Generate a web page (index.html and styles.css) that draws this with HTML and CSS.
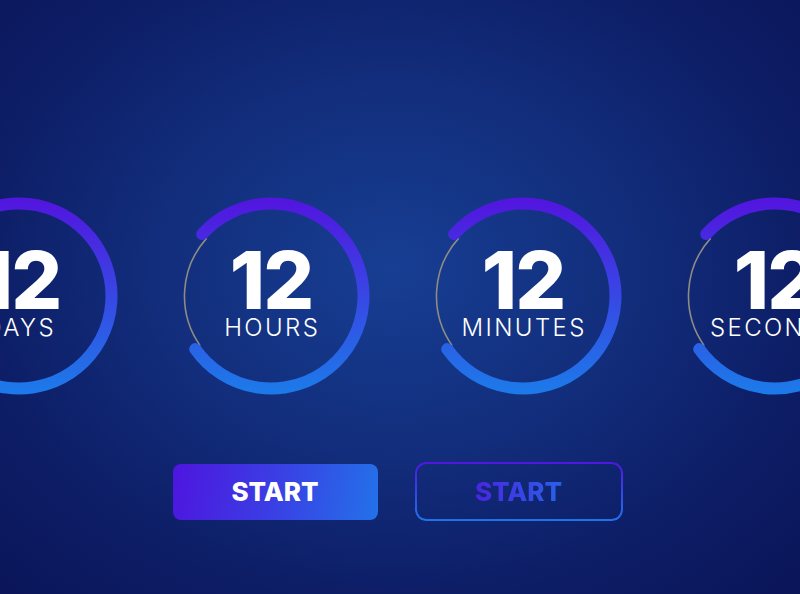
FILE: index.html
```html
<!DOCTYPE html>
<html lang="en">
<head>
<meta charset="utf-8">
<title>Countdown</title>
<link rel="stylesheet" href="styles.css">
</head>
<body>
<main class="stage">
  <section class="timers">
    <div class="timer">
      <svg class="ring" viewBox="0 0 200 200" width="200" height="200">
        <defs>
          <linearGradient id="arc-days" gradientUnits="userSpaceOnUse" x1="100" y1="6" x2="100" y2="194">
            <stop offset="0" stop-color="#5216df"/>
            <stop offset="1" stop-color="#1d79e9"/>
          </linearGradient>
        </defs>
        <path class="track" d="M 29.14 149.62 A 86.5 86.5 0 0 1 35.72 42.12"/>
        <path class="arc" stroke="url(#arc-days)" d="M 31.26 38.11 A 92.5 92.5 0 1 1 24.23 153.06"/>
      </svg>
      <div class="readout">
        <span class="value">12</span>
        <span class="unit">DAYS</span>
      </div>
    </div>
    <div class="timer">
      <svg class="ring" viewBox="0 0 200 200" width="200" height="200">
        <defs>
          <linearGradient id="arc-hours" gradientUnits="userSpaceOnUse" x1="100" y1="6" x2="100" y2="194">
            <stop offset="0" stop-color="#5216df"/>
            <stop offset="1" stop-color="#1d79e9"/>
          </linearGradient>
        </defs>
        <path class="track" d="M 29.14 149.62 A 86.5 86.5 0 0 1 35.72 42.12"/>
        <path class="arc" stroke="url(#arc-hours)" d="M 31.26 38.11 A 92.5 92.5 0 1 1 24.23 153.06"/>
      </svg>
      <div class="readout">
        <span class="value">12</span>
        <span class="unit">HOURS</span>
      </div>
    </div>
    <div class="timer">
      <svg class="ring" viewBox="0 0 200 200" width="200" height="200">
        <defs>
          <linearGradient id="arc-minutes" gradientUnits="userSpaceOnUse" x1="100" y1="6" x2="100" y2="194">
            <stop offset="0" stop-color="#5216df"/>
            <stop offset="1" stop-color="#1d79e9"/>
          </linearGradient>
        </defs>
        <path class="track" d="M 29.14 149.62 A 86.5 86.5 0 0 1 35.72 42.12"/>
        <path class="arc" stroke="url(#arc-minutes)" d="M 31.26 38.11 A 92.5 92.5 0 1 1 24.23 153.06"/>
      </svg>
      <div class="readout">
        <span class="value">12</span>
        <span class="unit">MINUTES</span>
      </div>
    </div>
    <div class="timer">
      <svg class="ring" viewBox="0 0 200 200" width="200" height="200">
        <defs>
          <linearGradient id="arc-seconds" gradientUnits="userSpaceOnUse" x1="100" y1="6" x2="100" y2="194">
            <stop offset="0" stop-color="#5216df"/>
            <stop offset="1" stop-color="#1d79e9"/>
          </linearGradient>
        </defs>
        <path class="track" d="M 29.14 149.62 A 86.5 86.5 0 0 1 35.72 42.12"/>
        <path class="arc" stroke="url(#arc-seconds)" d="M 31.26 38.11 A 92.5 92.5 0 1 1 24.23 153.06"/>
      </svg>
      <div class="readout">
        <span class="value">12</span>
        <span class="unit">SECONDS</span>
      </div>
    </div>
  </section>
  <div class="actions">
    <button class="btn btn-solid" type="button">START</button>
    <button class="btn btn-outline" type="button"><span class="btn-label">START</span></button>
  </div>
</main>
</body>
</html>
```
FILE: styles.css
```css
* {
  box-sizing: border-box;
}

html,
body {
  margin: 0;
  height: 100%;
}

body {
  overflow: hidden;
  font-family: "Inter", "Open Sans", "Liberation Sans", sans-serif;
  background: radial-gradient(ellipse 75% 80% at 49% 45%, #173e93 0%, #122d7b 40%, #0d1d66 70%, #0a1456 100%);
  color: #fff;
}

.stage {
  display: flex;
  flex-direction: column;
  align-items: center;
  padding: 196px 6px 0 0;
  height: 100%;
}

/* Row of countdown rings; wider than the viewport, spills evenly on both sides */
.timers {
  display: flex;
  justify-content: center;
  gap: 52px;
  width: 100%;
}

.timer {
  flex: none;
  display: grid;
  width: 200px;
  height: 200px;
}

.ring,
.readout {
  grid-area: 1 / 1;
}

.ring {
  display: block;
}

.arc {
  fill: none;
  stroke-width: 12;
  stroke-linecap: round;
}

.track {
  fill: none;
  stroke: #8e8b84;
  stroke-width: 1.6;
}

.readout {
  display: flex;
  flex-direction: column;
  align-items: center;
  justify-content: center;
  padding-bottom: 15px;
}

.value {
  font-weight: 800;
  font-size: 80px;
  line-height: 78px;
  letter-spacing: -2px;
}

.unit {
  font-weight: 300;
  font-size: 24px;
  line-height: 18px;
  letter-spacing: 2.4px;
  padding-left: 2.4px;
  white-space: nowrap;
}

.actions {
  display: flex;
  align-items: center;
  gap: 37px;
  margin: 66px 0 0 1px;
}

.btn {
  font-family: inherit;
  font-weight: 800;
  font-size: 26px;
  border: 0;
  padding: 0;
  cursor: pointer;
  display: flex;
  align-items: center;
  justify-content: center;
}

.btn-solid {
  width: 205px;
  height: 56px;
  border-radius: 8px;
  color: #fff;
  background: linear-gradient(100deg, #4e15df 0%, #3a3fe4 50%, #2372e9 100%);
}

.btn-outline {
  position: relative;
  width: 208px;
  height: 59px;
  border-radius: 11px;
  background: transparent;
}

/* Gradient outline drawn as a masked ring over the button box */
.btn-outline::before {
  content: "";
  position: absolute;
  inset: 0;
  border-radius: inherit;
  padding: 1.6px;
  background: linear-gradient(180deg, #5016df, #1f73e9);
  -webkit-mask: linear-gradient(#000 0 0) content-box, linear-gradient(#000 0 0);
  -webkit-mask-composite: xor;
  mask-composite: exclude;
}

.btn-label {
  background: linear-gradient(90deg, #4a24e1, #2961e8);
  -webkit-background-clip: text;
  background-clip: text;
  color: transparent;
}
```
